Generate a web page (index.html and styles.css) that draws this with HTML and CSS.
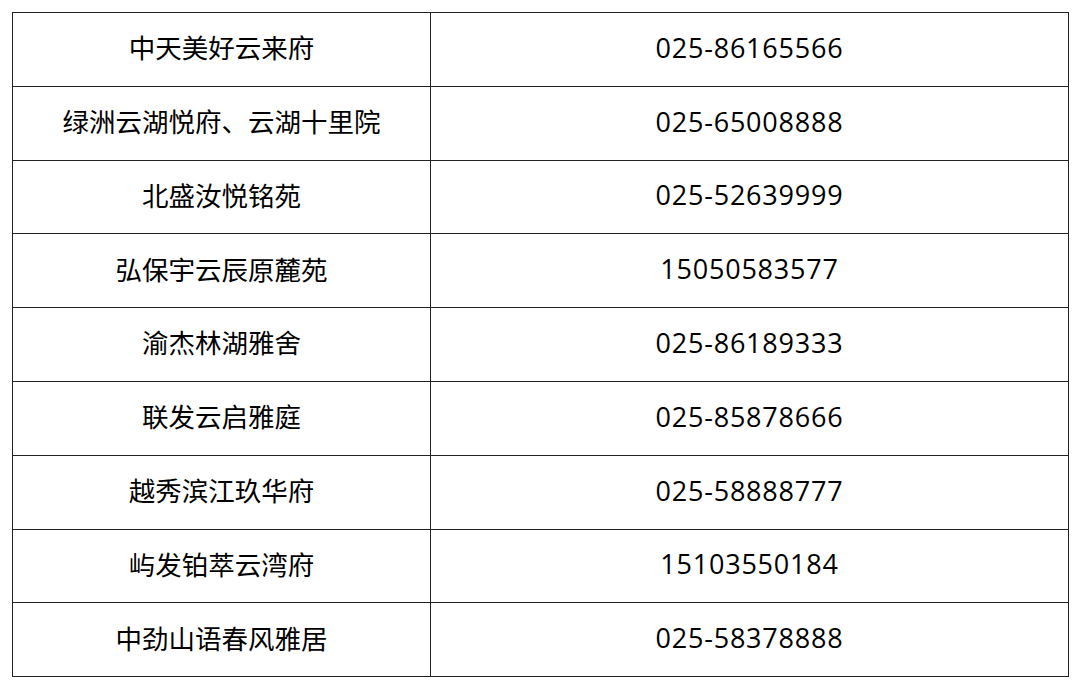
FILE: index.html
```html
<!DOCTYPE html>
<html lang="zh">
<head>
<meta charset="utf-8">
<link rel="stylesheet" href="styles.css">
</head>
<body>
<table class="list">
<tr><td class="name">中天美好云来府</td><td class="tel">025-86165566</td></tr>
<tr><td class="name">绿洲云湖悦府、云湖十里院</td><td class="tel">025-65008888</td></tr>
<tr><td class="name">北盛汝悦铭苑</td><td class="tel">025-52639999</td></tr>
<tr><td class="name">弘保宇云辰原麓苑</td><td class="tel">15050583577</td></tr>
<tr><td class="name">渝杰林湖雅舍</td><td class="tel">025-86189333</td></tr>
<tr><td class="name">联发云启雅庭</td><td class="tel">025-85878666</td></tr>
<tr><td class="name">越秀滨江玖华府</td><td class="tel">025-58888777</td></tr>
<tr><td class="name">屿发铂萃云湾府</td><td class="tel">15103550184</td></tr>
<tr><td class="name">中劲山语春风雅居</td><td class="tel">025-58378888</td></tr>
</table>
</body>
</html>
```
FILE: styles.css
```css
html, body {
  margin: 0;
  padding: 0;
  background: #fff;
}
body {
  padding: 12px 0 0 12px;
  font-family: "Open Sans", "Noto Sans CJK SC", sans-serif;
  color: #000;
}
.list {
  border-collapse: collapse;
  width: 1057px;
  table-layout: fixed;
}
.list td {
  border: 1.5px solid #222;
  height: 68.8px;
  padding: 0 0 4px;
  text-align: center;
  vertical-align: middle;
  font-size: 26.5px;
  line-height: 1;
}
.list td.name {
  width: 417px;
  font-family: "Noto Sans CJK SC", sans-serif;
}
.list td.tel {
  font-family: "Open Sans", sans-serif;
  font-size: 27px;
  letter-spacing: 0.8px;
}
```
